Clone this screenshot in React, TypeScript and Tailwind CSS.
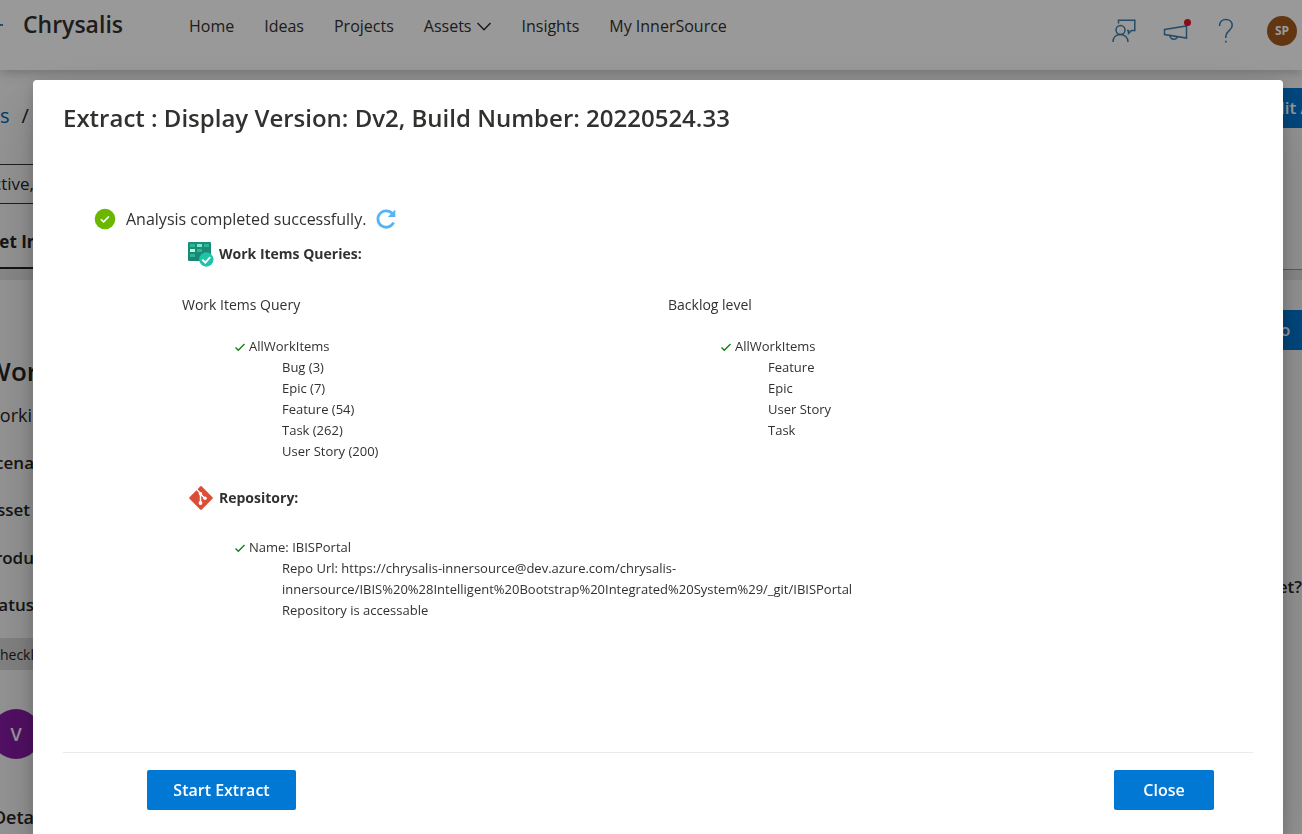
import React from "react";

const navItems = ["Home", "Ideas", "Projects", "Assets", "Insights", "My InnerSource"];

function FeedbackIcon() {
  return (
    <svg width="24" height="24" viewBox="0 0 24 24" fill="none" stroke="#3f7fae" strokeWidth="1.5">
      <path d="M6.5 4.5V1.2H22.8V11.5H19.5L16.5 14.5V11.5H15" />
      <circle cx="8.5" cy="11" r="4.5" />
      <path d="M1 23c0-4.5 3-7.5 7.3-7.5S16 18.5 16 23" />
    </svg>
  );
}

function MegaphoneIcon() {
  return (
    <svg width="26" height="24" viewBox="0 0 26 24" fill="none" stroke="#3f7fae" strokeWidth="1.5">
      <path d="M1.5 10.5L23.5 7V19L1.5 15.5Z" />
      <path d="M7 16.7c.3 2.3 1.8 3.5 3.7 3.5s3.2-1 3.6-2.4" />
    </svg>
  );
}

function QuestionIcon() {
  return (
    <svg width="16" height="26" viewBox="0 0 16 26" fill="none" stroke="#3f7fae" strokeWidth="1.6">
      <path d="M1.5 8c0-4 2.5-6.5 6.3-6.500s6.4 2.4 6.4 6c0 5-6.4 5.5-6.4 11V20" />
      <path d="M7.8 22.8v1.8" />
    </svg>
  );
}

function SuccessIcon() {
  return (
    <svg width="22" height="22" viewBox="0 0 22 22" fill="none">
      <circle cx="11" cy="11" r="10.3" fill="#6bb700" />
      <path d="M6.8 11.2l2.8 2.7 5.3-5.4" stroke="#fff" strokeWidth="1.5" />
    </svg>
  );
}

function RefreshIcon() {
  return (
    <svg width="20" height="20" viewBox="0 0 20 20" fill="none">
      <path d="M16.3 4.6A8.2 8.2 0 1 0 17.6 13.5" stroke="#56b4f5" strokeWidth="2.8" />
      <path d="M19.3 0.5V8H11.8Z" fill="#56b4f5" />
    </svg>
  );
}

function BoardIcon() {
  return (
    <svg width="26" height="26" viewBox="0 0 26 26">
      <defs>
        <linearGradient id="board" x1="0" y1="0" x2="0" y2="1">
          <stop offset="0" stopColor="#1c8f78" />
          <stop offset="1" stopColor="#1a8570" />
        </linearGradient>
      </defs>
      <rect x="0" y="1" width="23" height="19" rx="1" fill="url(#board)" />
      <rect x="2" y="3" width="5" height="3" fill="#2bb496" />
      <rect x="9" y="3" width="5" height="3" fill="#7de8cc" />
      <rect x="16" y="3" width="5" height="3" fill="#2bb496" />
      <rect x="2" y="8" width="5" height="3" fill="#b5f7e4" />
      <rect x="9" y="8" width="5" height="3" fill="#2bb496" />
      <rect x="2" y="13" width="5" height="3" fill="#2bb496" />
      <circle cx="18.3" cy="18.5" r="7.2" fill="#1fc3a7" />
      <path d="M14.3 18.6l3 3 5-5.5" stroke="#fff" strokeWidth="2" fill="none" />
    </svg>
  );
}

function GitIcon() {
  return (
    <svg width="26" height="26" viewBox="0 0 26 26" fill="none">
      <rect x="4.3" y="4.3" width="17.4" height="17.4" rx="1.2" transform="rotate(45 13 13)" fill="#dd4c35" />
      <path d="M8.8 4.5L12.5 8.5V18M12.5 9l4.5 4.5" stroke="#fff" strokeWidth="1.5" />
      <circle cx="12.5" cy="8.7" r="1.8" fill="#fff" />
      <circle cx="12.5" cy="18" r="1.9" fill="#fff" />
      <circle cx="17" cy="13.3" r="1.8" fill="#fff" />
    </svg>
  );
}

function Tick() {
  return (
    <svg width="10" height="10" viewBox="0 0 10 10" fill="none" stroke="#107c10" strokeWidth="1.3">
      <path d="M0.5 5.5L3.3 8.3L9.5 2" />
    </svg>
  );
}

function ResultList({ title, rows }: { title: string; rows: string[] }) {
  return (
    <div className="pl-[53px] text-[13px] leading-[21px]">
      <p className="flex items-center gap-1">
        <span className="pt-px"><Tick /></span>
        {title}
      </p>
      <ul className="pl-[47px]">
        {rows.map((row) => (
          <li key={row}>{row}</li>
        ))}
      </ul>
    </div>
  );
}

function Header() {
  return (
    <header className="relative flex h-[70px] items-start justify-between bg-white pr-[5px] shadow-[0_2px_12px_rgba(0,0,0,0.25)]">
      <div className="flex">
        <span className="mt-6 h-[2px] w-[3px] bg-[#3f7fae]" />
        <span className="ml-5 pt-2 text-[23px] leading-8 font-semibold">Chrysalis</span>
        <nav className="ml-[66px] flex gap-[30px] pt-3 text-[16px] leading-[26px]">
          {navItems.map((item) => (
            <a key={item} href="#" className="flex items-center gap-1.5">
              {item}
              {item === "Assets" && (
                <svg width="14" height="9" viewBox="0 0 14 9" fill="none" stroke="#222" strokeWidth="1.3">
                  <path d="M0.5 1L7 7.7L13.5 1" />
                </svg>
              )}
            </a>
          ))}
        </nav>
      </div>
      <div className="flex items-center pt-4">
        <button aria-label="Feedback"><FeedbackIcon /></button>
        <button aria-label="Announcements" className="relative ml-[27px]">
          <MegaphoneIcon />
          <span className="absolute top-0 right-[-2px] size-[7px] rounded-full bg-[#e81123]" />
        </button>
        <button aria-label="Help" className="ml-[29px]"><QuestionIcon /></button>
        <span className="ml-[33px] flex size-[30px] items-center justify-center rounded-full bg-[#a35a1c] text-[12px] font-bold text-white">
          SP
        </span>
      </div>
    </header>
  );
}

function Page() {
  return (
    <div className="flex justify-between font-semibold text-[#252423]">
      <div className="flex w-[38px] flex-col overflow-hidden whitespace-nowrap">
        <p className="flex h-[92px] items-center gap-3 text-[20px] font-normal">
          <a href="#" className="text-[#0063b1]">s</a>/
        </p>
        <p className="mt-0.5 flex h-10 items-center justify-end border-y border-[#333] pr-1 text-[17px] font-normal">ctive,</p>
        <p className="flex h-[65px] items-center justify-end border-b-2 border-[#222] pt-3 text-[17px] font-bold">et In</p>
        <div className="h-[11px] shrink-0 bg-[#e4e4e4]" />
        <p className="mt-[71px] flex h-10 items-center justify-end text-[26px]">Wor</p>
        <p className="mt-1 flex h-10 items-center justify-end pr-1.5 text-[18px] font-normal">orki</p>
        <p className="mt-2 flex h-10 items-center justify-end pr-1 text-[17px]">cena</p>
        <p className="mt-[7px] flex h-10 items-center justify-end pr-2 text-[17px]">sset</p>
        <p className="mt-2 flex h-10 items-center justify-end pr-1 text-[17px]">rodu</p>
        <p className="mt-[7px] flex h-10 items-center justify-end pr-1 text-[17px]">atus</p>
        <p className="mt-[13px] flex h-8 items-center justify-end bg-[#dadada] pr-1 text-[14px] font-normal">heckl</p>
        <p className="mt-[39px] flex size-[50px] -translate-x-[9px] items-center justify-center rounded-full bg-[#8a1aa8] text-[18px] text-white">V</p>
        <p className="mt-10 flex h-9 items-center justify-end pr-1 text-[18px] font-semibold">Deta</p>
      </div>
      <div className="flex w-[22px] flex-col overflow-hidden whitespace-nowrap">
        <button className="mt-[18px] flex h-10 shrink-0 items-center bg-[#0078d4] text-[17px] text-white">lit A</button>
        <div className="mt-[141px] h-[11px] shrink-0 border-t border-[#999] bg-[#e4e4e4]" />
        <button className="mt-[30px] flex h-10 shrink-0 items-center bg-[#0078d4] text-[17px] text-white">o</button>
        <p className="mt-[217px] flex h-10 items-center justify-end text-[17px]">et?</p>
      </div>
    </div>
  );
}

function Section({ icon, title }: { icon: React.ReactNode; title: string }) {
  return (
    <h3 className="flex items-center gap-[5px] pl-1.5 text-[14px] leading-[26px] font-bold">
      {icon}
      {title}
    </h3>
  );
}

function ExtractDialog() {
  return (
    <div
      role="dialog"
      aria-labelledby="dialog-title"
      className="flex min-h-full flex-col rounded-t-sm bg-white shadow-[0_26px_58px_rgba(0,0,0,0.22),0_5px_14px_rgba(0,0,0,0.18)]"
    >
      <h2 id="dialog-title" className="px-[30px] pt-5 text-[24px] leading-9 font-semibold">
        Extract : Display Version: Dv2, Build Number: 20220524.33
      </h2>
      <div className="flex-1 pr-[30px] pl-[61px]">
        <p className="flex items-center gap-2.5 pt-[69px] text-[16px] leading-7">
          <SuccessIcon />
          Analysis completed successfully.
          <button aria-label="Refresh"><RefreshIcon /></button>
        </p>
        <div className="pt-2 pl-[88px]">
          <Section icon={<BoardIcon />} title="Work Items Queries:" />
          <div className="grid grid-cols-2 pt-[26px] pr-[99px]">
            <div>
              <h4 className="pb-[19px] text-[14px] leading-6">Work Items Query</h4>
              <ResultList title="AllWorkItems" rows={["Bug (3)", "Epic (7)", "Feature (54)", "Task (262)", "User Story (200)"]} />
            </div>
            <div>
              <h4 className="pb-[19px] text-[14px] leading-6">Backlog level</h4>
              <ResultList title="AllWorkItems" rows={["Feature", "Epic", "User Story", "Task"]} />
            </div>
          </div>
          <div className="pt-[23px] pb-[26px]">
            <Section icon={<GitIcon />} title="Repository:" />
          </div>
          <ResultList
            title="Name: IBISPortal"
            rows={[
              "Repo Url: https://chrysalis-innersource@dev.azure.com/chrysalis-",
              "innersource/IBIS%20%28Intelligent%20Bootstrap%20Integrated%20System%29/_git/IBISPortal",
              "Repository is accessable",
            ]}
          />
        </div>
      </div>
      <footer className="mx-[30px] flex justify-between border-t border-[#edebe9] pt-[17px] pr-[39px] pb-6 pl-[84px] text-[16px] font-semibold text-white">
        <button className="h-10 w-[149px] rounded-xs bg-[#0078d4]">Start Extract</button>
        <button className="h-10 w-[100px] rounded-xs bg-[#0078d4]">Close</button>
      </footer>
    </div>
  );
}

export default function App() {
  return (
    <div className="h-screen overflow-hidden bg-[#f8f8f8] font-['Open_Sans','Noto_Sans',sans-serif] text-[#323130]">
      <Header />
      <Page />
      <div className="fixed inset-0 overflow-hidden bg-black/40 pt-20 pr-[19px] pl-[33px]">
        <ExtractDialog />
      </div>
    </div>
  );
}
